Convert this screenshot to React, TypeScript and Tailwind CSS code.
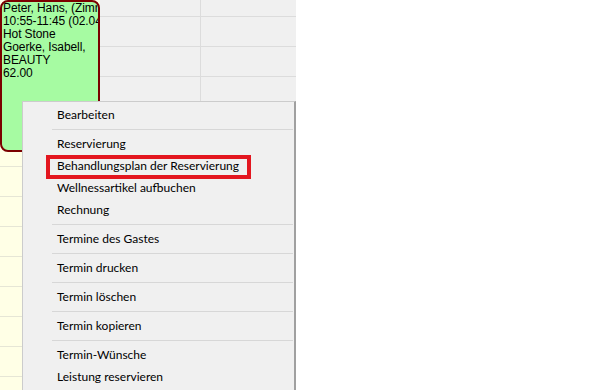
import React from "react";

const rowCount = 13;

function Column({ width, bg, line, borderRight }: { width: string; bg: string; line: string; borderRight?: boolean }) {
  return (
    <div className={`${width} ${bg} flex flex-col ${borderRight ? "border-r border-[#dcdcdc]" : ""}`}>
      <div className={`h-[17px] shrink-0 border-b ${line}`} />
      {Array.from({ length: rowCount }).map((_, i) => (
        <div key={i} className={`h-[30px] shrink-0 border-b ${line}`} />
      ))}
    </div>
  );
}

type Entry = { label: string } | { sep: true };

const entries: Entry[] = [
  { label: "Bearbeiten" },
  { sep: true },
  { label: "Reservierung" },
  { label: "Behandlungsplan der Reservierung" },
  { label: "Wellnessartikel aufbuchen" },
  { label: "Rechnung" },
  { sep: true },
  { label: "Termine des Gastes" },
  { sep: true },
  { label: "Termin drucken" },
  { sep: true },
  { label: "Termin löschen" },
  { sep: true },
  { label: "Termin kopieren" },
  { sep: true },
  { label: "Termin-Wünsche" },
  { label: "Leistung reservieren" },
];

export default function App() {
  return (
    <div className="relative w-[590px] h-[390px] overflow-hidden bg-white">
      <div className="flex h-[390px] w-[296px] overflow-hidden">
        <Column width="w-[100px]" bg="bg-[#ffffe6]" line="border-[#e6e6d6]" />
        <Column width="w-[101px]" bg="bg-[#f0f0f0]" line="border-[#dcdcdc]" borderRight />
        <Column width="w-[95px]" bg="bg-[#f0f0f0]" line="border-[#dcdcdc]" />
      </div>

      {/* appointment card */}
      <div
        className="absolute left-0 top-0 w-[100px] h-[152px] rounded-[8px] border-2 border-[#7b0000] bg-[#a6fba2] overflow-hidden whitespace-nowrap text-black text-[12px] leading-[13px] tracking-[-0.1px] pl-[1px]"
        style={{ fontFamily: '"Liberation Sans", Arial, sans-serif' }}
      >
        <div>Peter, Hans, (Zimmer 101)</div>
        <div>10:55-11:45 (02.04.2014)</div>
        <div>Hot Stone</div>
        <div>Goerke, Isabell,</div>
        <div>BEAUTY</div>
        <div>62.00</div>
      </div>

      {/* context menu */}
      <div
        className="absolute left-[22px] top-[101px] w-[274px] h-[300px] bg-[#f0f0f0] border-l border-t border-[#cccccc] border-r-2 border-r-[#a0a0a0] pt-[2px] text-[12px] text-black"
        style={{ fontFamily: 'Lato, "Noto Sans", sans-serif' }}
      >
        {entries.map((e, i) =>
          "sep" in e ? (
            <div key={i} className="h-[7px] flex items-center pl-[29px] pr-[1px]">
              <div className="h-px w-full bg-[#d7d7d7]" />
            </div>
          ) : (
            <div key={i} className="h-[22px] flex items-center pl-[34px] leading-none">
              {e.label}
            </div>
          )
        )}
      </div>

      {/* highlight annotation */}
      <div className="absolute left-[46px] top-[155px] w-[205px] h-[24px] border-[4px] border-[#e3161f]" />
    </div>
  );
}
